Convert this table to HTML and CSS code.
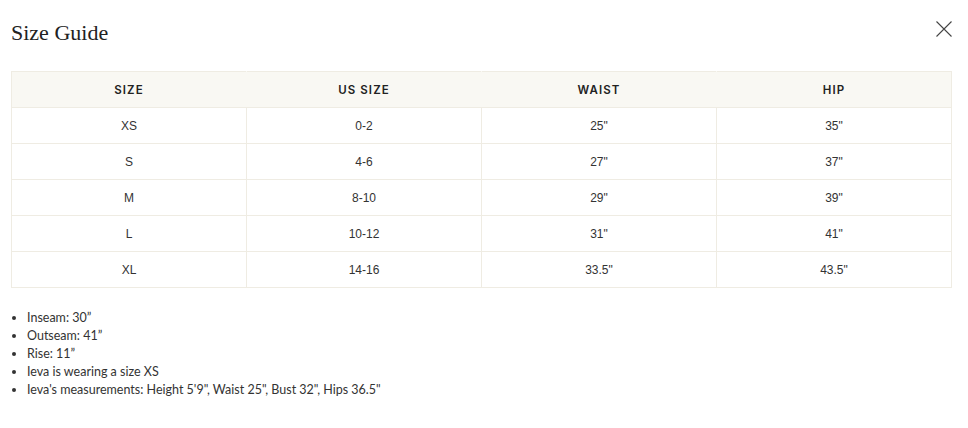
FILE: index.html
```html
<!DOCTYPE html>
<html>
<head>
<meta charset="utf-8">
<link rel="stylesheet" href="styles.css">
</head>
<body>
<div class="modal">
  <div class="head">
    <h1 class="title">Size Guide</h1>
    <button class="close" aria-label="Close">
      <svg width="16" height="16" viewBox="0 0 16 16"><path d="M0.5 0.5L15.5 15.5M15.5 0.5L0.5 15.5" stroke="#444" stroke-width="1.1" fill="none"/></svg>
    </button>
  </div>
  <table class="sizes">
    <thead>
      <tr><th>SIZE</th><th>US SIZE</th><th>WAIST</th><th>HIP</th></tr>
    </thead>
    <tbody>
      <tr><td>XS</td><td>0-2</td><td>25"</td><td>35"</td></tr>
      <tr><td>S</td><td>4-6</td><td>27"</td><td>37"</td></tr>
      <tr><td>M</td><td>8-10</td><td>29"</td><td>39"</td></tr>
      <tr><td>L</td><td>10-12</td><td>31"</td><td>41"</td></tr>
      <tr><td>XL</td><td>14-16</td><td>33.5"</td><td>43.5"</td></tr>
    </tbody>
  </table>
  <ul class="notes">
    <li>Inseam: 30”</li>
    <li>Outseam: 41”</li>
    <li>Rise: 11”</li>
    <li>Ieva is wearing a size XS</li>
    <li>Ieva's measurements: Height 5'9", Waist 25", Bust 32", Hips 36.5"</li>
  </ul>
</div>
</body>
</html>
```
FILE: styles.css
```css
html, body { margin: 0; background: #fff; }
.modal { padding: 0 16px 0 11px; }
.head { display: flex; justify-content: space-between; align-items: flex-start; padding-top: 20px; height: 71px; box-sizing: border-box; }
.title { margin: 0; font-family: "Liberation Serif", serif; font-weight: 400; font-size: 22px; line-height: 26px; color: #222; }
.close { background: none; border: 0; padding: 0; margin: 1px 0 0 0; width: 16px; height: 16px; cursor: pointer; }
.close svg { display: block; }
.sizes { width: 941px; border-collapse: collapse; table-layout: fixed; font-family: "Liberation Sans", Arial, sans-serif; font-size: 12px; color: #333; }
.sizes th, .sizes td { border: 1px solid #efece3; text-align: center; height: 35px; padding: 0; }
.sizes th { background: #f9f8f3; font-weight: 600; letter-spacing: 1.1px; color: #222; font-family: "Inter", "Liberation Sans", sans-serif; font-size: 11.5px; }
.sizes thead th { border-left-color: #f9f8f3; border-right-color: #f9f8f3; }
.sizes thead th:first-child { border-left-color: #efece3; }
.sizes thead th:last-child { border-right-color: #efece3; }
.notes { margin: 21px 0 0; padding-left: 16px; font-family: "Lato", "Liberation Sans", sans-serif; font-size: 12.5px; line-height: 18px; color: #333; }
```
